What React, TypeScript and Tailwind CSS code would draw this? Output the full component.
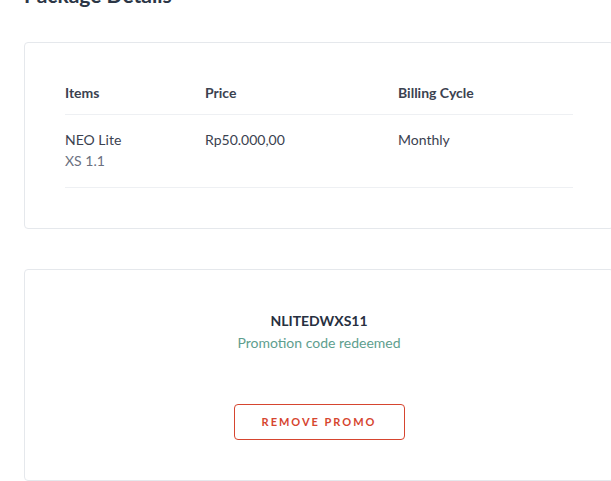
import type { ReactNode } from "react";

const rows = [{ name: "NEO Lite", sub: "XS 1.1", price: "Rp50.000,00", cycle: "Monthly" }];

export default function App() {
  return (
    <main className="min-h-[481px] overflow-hidden bg-white pl-6 font-['Lato','Liberation_Sans',sans-serif] text-[14px] text-[#3b4250]">
      <h1 className="-mt-[19px] text-[21px] leading-[28px] font-bold text-[#2c3646]">Package Details</h1>

      <Card className="mt-[33px] px-10 pt-[40px] pb-10">
        <table className="w-full border-collapse text-left">
          <thead>
            <tr className="border-b border-[#eef0f3]">
              <th className="w-[140px] pb-[11px] leading-[20px] font-bold">Items</th>
              <th className="w-[193px] pb-[11px] leading-[20px] font-bold">Price</th>
              <th className="pb-[11px] leading-[20px] font-bold">Billing Cycle</th>
            </tr>
          </thead>
          <tbody>
            {rows.map((r) => (
              <tr key={r.name} className="border-b border-[#eef0f3] align-top">
                <td className="pt-[14px] pb-[16px] leading-[21px]">
                  <div>{r.name}</div>
                  <div className="text-[#6b7080]">{r.sub}</div>
                </td>
                <td className="pt-[14px] leading-[21px]">{r.price}</td>
                <td className="pt-[14px] leading-[21px]">{r.cycle}</td>
              </tr>
            ))}
          </tbody>
        </table>
      </Card>

      <Card className="mt-10 flex flex-col items-center px-10 pt-[41px] pb-10">
        <p className="leading-[20px] font-bold text-[#27303f]">NLITEDWXS11</p>
        <p className="mt-[2px] leading-[20px] text-[#5e9e8e]">Promotion code redeemed</p>
        <button className="mt-[51px] h-9 w-[171px] rounded border border-[#d6452f] text-[11px] font-bold tracking-[0.18em] text-[#d6452f]">
          REMOVE PROMO
        </button>
      </Card>
    </main>
  );
}

function Card({ className, children }: { className: string; children: ReactNode }) {
  return <section className={`w-[590px] rounded border border-[#e5e8ec] bg-white ${className}`}>{children}</section>;
}
